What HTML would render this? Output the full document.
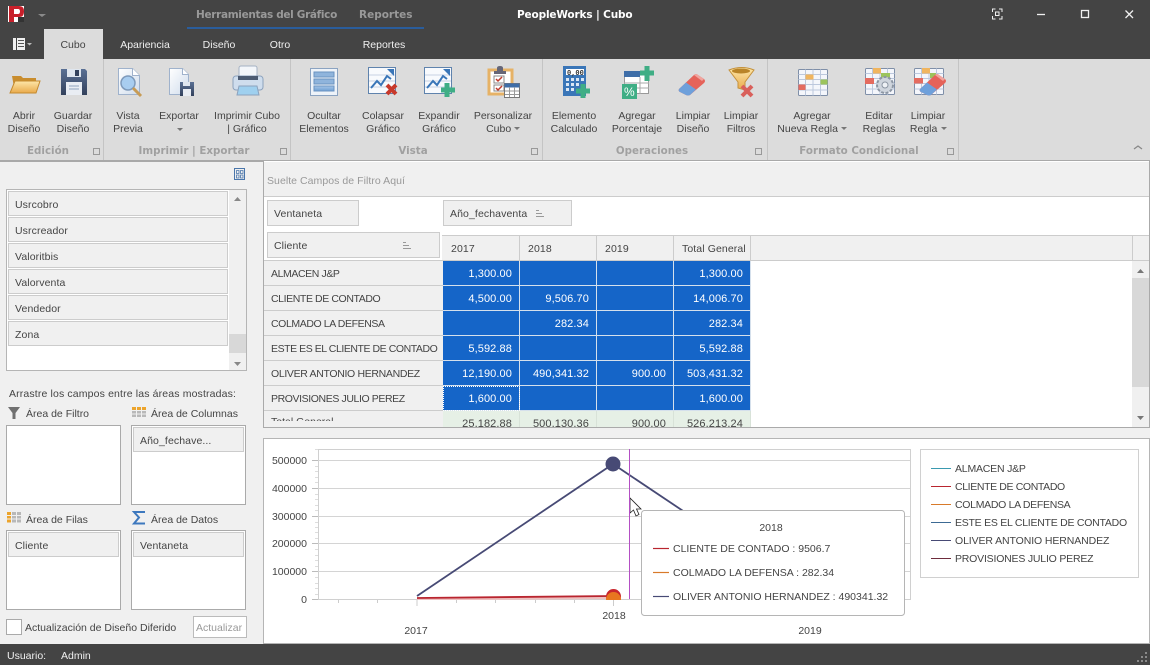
<!DOCTYPE html>
<html lang="es"><head><meta charset="utf-8"><title>PeopleWorks | Cubo</title>
<style>
*{box-sizing:border-box}
html,body{margin:0;padding:0;width:1150px;height:665px;overflow:hidden;background:#f0f0f0}
body{font:10.5px/13px "Liberation Sans",sans-serif;color:#444;position:relative}
div{position:absolute}
.b{background:#444}
.c{transform:translateX(-50%);text-align:center;white-space:nowrap;padding-top:2px}
.l{white-space:nowrap;padding-top:2px}
.w{color:#f0f0f0}
.g{font:bold 10.3px/13px "DejaVu Sans",sans-serif;color:#a0a0a0;transform:translateX(-50%);white-space:nowrap}
.sep{width:1px;top:59px;height:101px;background:#c4c4c4}
.fi{background:#f0f0f0;border:1px solid #ccc;padding:7px 6px 0;white-space:nowrap;letter-spacing:.1px}
.box{background:#fff;border:1px solid #aaa}
.ch{top:235px;height:26px;background:#f0f0f0;border-right:1px solid #ccc;border-top:1px solid #ccc;padding:7px 0 0 8px;letter-spacing:.1px;white-space:nowrap}
.rh{left:264px;width:179px;height:25px;background:#f0f0f0;border-bottom:1px solid #ccc;padding:7px 0 0 7px;white-space:nowrap;letter-spacing:-.4px;color:#444}
.cell{font-size:11px;height:25px;width:77px;background:#1565c8;border-right:1px solid #d5e0ec;border-bottom:1px solid #d5e0ec;color:#fff;text-align:right;padding:7px 7px 0 0;letter-spacing:.1px}
.tot{background:#e6f0e6;color:#444;border-color:#d8e2d8}
</style></head><body>

<div class="b" style="left:0;top:0;width:1150px;height:59px"></div>
<div style="left:44px;top:29px;width:59px;height:30px;background:#dcdcdc"></div>
<div style="left:0;top:59px;width:1150px;height:101px;background:#dcdcdc"></div>
<div style="left:0;top:160px;width:1150px;height:2px;background:#a9a9a9"></div>
<div style="left:187px;top:27px;width:237px;height:2px;background:#2a5d9c"></div>

<div class="l" style="left:196px;top:7px;font-weight:bold;font-family:'DejaVu Sans',sans-serif;font-size:10.5px;color:#999;letter-spacing:-.33px">Herramientas del Gráfico</div>
<div class="l" style="left:359px;top:7px;font-weight:bold;font-family:'DejaVu Sans',sans-serif;font-size:10.5px;color:#999">Reportes</div>
<div class="l" style="left:517px;top:7px;font-weight:bold;font-family:'DejaVu Sans',sans-serif;font-size:10.5px;color:#fff;letter-spacing:-.15px">PeopleWorks | Cubo</div>

<div class="c" style="left:73px;top:37px">Cubo</div>
<div class="c w" style="left:145px;top:37px">Apariencia</div>
<div class="c w" style="left:219px;top:37px">Diseño</div>
<div class="c w" style="left:280px;top:37px">Otro</div>
<div class="c w" style="left:384px;top:37px">Reportes</div>

<div class="sep" style="left:103px"></div><div class="sep" style="left:290px"></div><div class="sep" style="left:542px"></div><div class="sep" style="left:767px"></div><div class="sep" style="left:958px"></div>

<div class="c" style="left:24px;top:108px">Abrir<br>Diseño</div>
<div class="c" style="left:73px;top:108px">Guardar<br>Diseño</div>
<div class="c" style="left:128px;top:108px">Vista<br>Previa</div>
<div class="c" style="left:179px;top:108px">Exportar</div>
<div class="c" style="left:247px;top:108px">Imprimir Cubo<br>| Gráfico</div>
<div class="c" style="left:324px;top:108px">Ocultar<br>Elementos</div>
<div class="c" style="left:383px;top:108px">Colapsar<br>Gráfico</div>
<div class="c" style="left:439px;top:108px">Expandir<br>Gráfico</div>
<div class="c" style="left:503px;top:108px">Personalizar<br>Cubo &nbsp;&nbsp;</div>
<div class="c" style="left:574px;top:108px">Elemento<br>Calculado</div>
<div class="c" style="left:637px;top:108px">Agregar<br>Porcentaje</div>
<div class="c" style="left:693px;top:108px">Limpiar<br>Diseño</div>
<div class="c" style="left:741px;top:108px">Limpiar<br>Filtros</div>
<div class="c" style="left:812px;top:108px">Agregar<br>Nueva Regla &nbsp;&nbsp;</div>
<div class="c" style="left:879px;top:108px">Editar<br>Reglas</div>
<div class="c" style="left:928px;top:108px">Limpiar<br>Regla &nbsp;&nbsp;</div>

<div class="g" style="left:48px;top:145px">Edición</div>
<div class="g" style="left:194px;top:145px">Imprimir | Exportar</div>
<div class="g" style="left:413px;top:145px">Vista</div>
<div class="g" style="left:652px;top:145px">Operaciones</div>
<div class="g" style="left:859px;top:145px">Formato Condicional</div>

<!-- left panel -->
<div class="box" style="left:6px;top:189px;width:241px;height:182px;border-color:#b5b5b5"></div>
<div style="left:229px;top:190px;width:17px;height:180px;background:#f0f0f0"></div>
<div style="left:229px;top:334px;width:17px;height:19px;background:#d8d8d8"></div>
<div class="fi" style="left:8px;top:191px;width:220px;height:25px">Usrcobro</div>
<div class="fi" style="left:8px;top:217px;width:220px;height:25px">Usrcreador</div>
<div class="fi" style="left:8px;top:243px;width:220px;height:25px">Valoritbis</div>
<div class="fi" style="left:8px;top:269px;width:220px;height:25px">Valorventa</div>
<div class="fi" style="left:8px;top:295px;width:220px;height:25px">Vendedor</div>
<div class="fi" style="left:8px;top:321px;width:220px;height:25px">Zona</div>

<div class="l" style="left:9px;top:386px;letter-spacing:.14px">Arrastre los campos entre las áreas mostradas:</div>
<div class="l" style="left:26px;top:406px">Área de Filtro</div>
<div class="l" style="left:151px;top:406px">Área de Columnas</div>
<div class="l" style="left:26px;top:512px">Área de Filas</div>
<div class="l" style="left:151px;top:512px">Área de Datos</div>

<div class="box" style="left:6px;top:425px;width:115px;height:80px"></div>
<div class="box" style="left:131px;top:425px;width:115px;height:80px"></div>
<div class="box" style="left:6px;top:530px;width:115px;height:80px"></div>
<div class="box" style="left:131px;top:530px;width:115px;height:80px"></div>
<div class="fi" style="left:133px;top:427px;width:111px;height:25px">Año_fechave...</div>
<div class="fi" style="left:8px;top:532px;width:111px;height:25px">Cliente</div>
<div class="fi" style="left:133px;top:532px;width:111px;height:25px">Ventaneta</div>

<div class="box" style="left:6px;top:619px;width:16px;height:16px"></div>
<div class="l" style="left:25px;top:620px">Actualización de Diseño Diferido</div>
<div class="box" style="left:193px;top:616px;width:54px;height:22px;border-color:#bbb;color:#999;padding:5px 0 0 2px">Actualizar</div>

<!-- pivot -->
<div style="left:263px;top:161px;width:887px;height:267px;background:#fff;border-left:1px solid #aaa;border-right:1px solid #aaa;border-bottom:1px solid #aaa"></div>
<div style="left:264px;top:162px;width:885px;height:35px;background:#f0f0f0;border-bottom:1px solid #ccc"></div>
<div class="l" style="left:267px;top:173px;color:#999;letter-spacing:.05px">Suelte Campos de Filtro Aquí</div>

<div class="fi" style="left:267px;top:200px;width:92px;height:26px">Ventaneta</div>
<div class="fi" style="left:443px;top:200px;width:129px;height:26px">Año_fechaventa</div>
<div class="fi" style="left:267px;top:232px;width:173px;height:26px">Cliente</div>

<div class="ch" style="left:442px;width:78px;padding-left:9px">2017</div>
<div class="ch" style="left:520px;width:77px">2018</div>
<div class="ch" style="left:597px;width:77px">2019</div>
<div class="ch" style="left:674px;width:77px">Total General</div>
<div class="ch" style="left:751px;width:382px"></div>
<div class="ch" style="left:1133px;width:16px;border-right:0"></div>
<div style="left:264px;top:260px;width:885px;height:1px;background:#ccc"></div>

<div class="rh" style="top:261px">ALMACEN J&amp;P</div>
<div class="rh" style="top:286px">CLIENTE DE CONTADO</div>
<div class="rh" style="top:311px">COLMADO LA DEFENSA</div>
<div class="rh" style="top:336px;letter-spacing:-.44px">ESTE ES EL CLIENTE DE CONTADO</div>
<div class="rh" style="top:361px;letter-spacing:-.33px">OLIVER ANTONIO HERNANDEZ</div>
<div class="rh" style="top:386px">PROVISIONES JULIO PEREZ</div>
<div style="left:264px;top:411px;width:179px;height:16px;background:#f0f0f0"><div style="left:0;top:0;width:179px;height:10px;overflow:hidden"><div style="left:7px;top:5px;white-space:nowrap">Total General</div></div></div>

<div class="cell" style="left:443px;top:261px">1,300.00</div><div class="cell" style="left:520px;top:261px"></div><div class="cell" style="left:597px;top:261px"></div><div class="cell" style="left:674px;top:261px">1,300.00</div>
<div class="cell" style="left:443px;top:286px">4,500.00</div><div class="cell" style="left:520px;top:286px">9,506.70</div><div class="cell" style="left:597px;top:286px"></div><div class="cell" style="left:674px;top:286px">14,006.70</div>
<div class="cell" style="left:443px;top:311px"></div><div class="cell" style="left:520px;top:311px">282.34</div><div class="cell" style="left:597px;top:311px"></div><div class="cell" style="left:674px;top:311px">282.34</div>
<div class="cell" style="left:443px;top:336px">5,592.88</div><div class="cell" style="left:520px;top:336px"></div><div class="cell" style="left:597px;top:336px"></div><div class="cell" style="left:674px;top:336px">5,592.88</div>
<div class="cell" style="left:443px;top:361px">12,190.00</div><div class="cell" style="left:520px;top:361px">490,341.32</div><div class="cell" style="left:597px;top:361px">900.00</div><div class="cell" style="left:674px;top:361px">503,431.32</div>
<div class="cell" style="left:443px;top:386px;outline:1px dotted #fff;outline-offset:-1px">1,600.00</div><div class="cell" style="left:520px;top:386px"></div><div class="cell" style="left:597px;top:386px"></div><div class="cell" style="left:674px;top:386px">1,600.00</div>
<div style="left:443px;top:411px;width:308px;height:16px;overflow:hidden">
<div class="cell tot" style="left:0;top:0">25,182.88</div><div class="cell tot" style="left:77px;top:0">500,130.36</div><div class="cell tot" style="left:154px;top:0">900.00</div><div class="cell tot" style="left:231px;top:0">526,213.24</div>
</div>

<div style="left:1132px;top:261px;width:17px;height:166px;background:#f0f0f0"></div>
<div style="left:1132px;top:278px;width:17px;height:109px;background:#d8d8d8"></div>

<!-- chart panel -->
<div style="left:263px;top:438px;width:887px;height:206px;background:#fff;border:1px solid #b5b5b5"></div>

<svg width="1150" height="665" style="position:absolute;left:0;top:0" xmlns="http://www.w3.org/2000/svg">
<defs>
<linearGradient id="fo" x1="0" y1="0" x2="0" y2="1"><stop offset="0" stop-color="#fde7a9"/><stop offset="1" stop-color="#e9aa4b"/></linearGradient>
<linearGradient id="dk" x1="0" y1="0" x2="0" y2="1"><stop offset="0" stop-color="#5a7094"/><stop offset="1" stop-color="#33415c"/></linearGradient>
<linearGradient id="dc" x1="0" y1="0" x2="1" y2="1"><stop offset="0" stop-color="#fff"/><stop offset="1" stop-color="#cfdcec"/></linearGradient>
<linearGradient id="bl" x1="0" y1="0" x2="0" y2="1"><stop offset="0" stop-color="#a5c6e8"/><stop offset="1" stop-color="#6e9fd3"/></linearGradient>
<clipPath id="pc"><rect x="318" y="449" width="592" height="151"/></clipPath>
<g id="gridt"><rect width="29" height="26" rx="1" fill="#f4f6fb" stroke="#7f8fa8"/><path d="M7 0v26M14.500 0v26M22 0v26M0 5h29M0 10h29M0 15h29M0 20.500h29" stroke="#bcc8dd" fill="none"/></g>
<g id="chartt"><rect x=".5" y=".5" width="27" height="26" fill="#f8fafd" stroke="#5f83ad"/><path d="M1 8h26M1 14h26M1 20h26" stroke="#c7d3e4"/><path d="M3 21l6-7 4 4 6-9 4 3" fill="none" stroke="#3a76b8" stroke-width="2"/><path d="M19 2h7v7z" fill="#3a76b8"/></g>
<g id="eras"><path d="M0 16L15 2q2-2 4 0l6 4q2 2 0 4L11 22q-2 1-4 0L1 19q-2-1-1-3z" fill="#e5635a"/><path d="M0 16l7-6.500 10 7L11 22q-2 1-4 0L1 19q-2-1-1-3z" fill="#6ea0db"/><path d="M15 2q2-2 4 0l6 4-2 2-8-6z" fill="#f0a59f"/></g>
</defs>

<!-- logo + menu -->
<rect x="8" y="6" width="16" height="16" fill="#fff"/>
<path d="M9 6h10q5 0 5 5v1q0 5-5 5h-5v5H9zM14 9v5h4q2 0 2-2.500T18 9z" fill="#c8202b"/>
<rect x="18" y="17" width="6" height="5" fill="#333"/>
<path d="M38 14h8l-4 3z" fill="#8a8a8a"/>
<rect x="13" y="38" width="3" height="12" fill="#f0f0f0"/><rect x="17" y="38" width="8" height="12" fill="#f0f0f0"/><path d="M18 40.500h6M18 43.500h6M18 46.500h6" stroke="#555"/>
<path d="M27 43h5l-2.500 2.500z" fill="#bbb"/>

<!-- window controls -->
<path d="M992.500 12v-3h3M999 9h3v3M1002 16v3h-3M995.500 19h-3v-3" fill="none" stroke="#f0f0f0" stroke-width="1"/><rect x="995.500" y="12" width="3.500" height="3.500" fill="none" stroke="#f0f0f0"/>
<path d="M1037 14.500h8" stroke="#f0f0f0" stroke-width="1.300"/>
<rect x="1081.500" y="10.500" width="7" height="7" fill="none" stroke="#f0f0f0" stroke-width="1.300"/>
<path d="M1125.500 10.500l7.500 7.500M1133 10.500l-7.500 7.500" stroke="#f0f0f0" stroke-width="1.300"/>

<!-- folder -->
<path d="M12 76h9l2 2h13v15H15z" fill="#c98d2e"/><path d="M15 81h25l-4 12H10z" fill="url(#fo)" stroke="#c48a2f"/>
<!-- floppy -->
<path d="M61 69h24l2 2v24H61z" fill="url(#dk)"/><rect x="67" y="69" width="14" height="8" fill="#dfe6ef"/><rect x="75" y="70" width="4" height="6" fill="#33415c"/><rect x="66" y="82" width="16" height="13" fill="#e9edf3"/><path d="M69 86h10M69 89h10" stroke="#8fa2bd"/>
<!-- vista previa -->
<path d="M118.500 68.500h14l7 7v19h-21z" fill="url(#dc)" stroke="#9fb2cc"/><path d="M132.500 68.500v7h7" fill="#fff" stroke="#9fb2cc"/>
<circle cx="128" cy="83" r="7" fill="#a8cdf0" stroke="#7e9abb" stroke-width="1.500"/><path d="M133 88l8 8" stroke="#c79b55" stroke-width="3"/>
<!-- exportar -->
<path d="M169.500 68.500h13l6 6v20h-19z" fill="url(#dc)" stroke="#9fb2cc"/><path d="M182.500 68.500v6h6" fill="#fff" stroke="#9fb2cc"/>
<rect x="180" y="82" width="14" height="14" fill="url(#dk)"/><rect x="183" y="82" width="7" height="4" fill="#dfe6ef"/><rect x="183" y="89" width="8" height="7" fill="#e9edf3"/>
<!-- imprimir -->
<rect x="239" y="66" width="18" height="12" rx="2" fill="#f3f6fa" stroke="#a5b2c4"/><rect x="233" y="76" width="30" height="14" rx="3" fill="#cfdded" stroke="#8ca2bd"/><rect x="238" y="76" width="20" height="4" fill="#4c5b72"/><path d="M239 86h18l2 9h-22z" fill="#9fd0ef" stroke="#8ca2bd"/>
<!-- ocultar -->
<rect x="310.500" y="68.500" width="27" height="27" fill="#eef3f9" stroke="#8ba3c1"/><rect x="314" y="72" width="20" height="5" fill="#8fb4dc" stroke="#6b93c1"/><rect x="314" y="79" width="20" height="5" fill="#8fb4dc" stroke="#6b93c1"/><rect x="314" y="86" width="20" height="5" fill="url(#bl)" stroke="#6b93c1"/>
<!-- colapsar -->
<use href="#chartt" x="368" y="67"/><path d="M387 85l9 9M396 85l-9 9" stroke="#c8392b" stroke-width="4"/>
<!-- expandir -->
<use href="#chartt" x="424" y="67"/><path d="M447 83v14M441 90h14" stroke="#3fae85" stroke-width="5"/>
<!-- personalizar -->
<rect x="489" y="70" width="23" height="24" fill="#fff" stroke="#e6b266" stroke-width="3"/><path d="M497 71v-3q0-2 3-2t3 2v3h3v3h-12v-3z" fill="#667"/><rect x="494" y="76" width="10" height="7" fill="#fff" stroke="#888"/><rect x="494" y="85" width="10" height="6" fill="#fff" stroke="#888"/><path d="M496 79l2 2 4-4M496 88l2 2 4-4" stroke="#c0392b" fill="none" stroke-width="1.500"/>
<rect x="504.500" y="83.500" width="15" height="14" fill="#fff" stroke="#777"/><rect x="504.500" y="83.500" width="15" height="4" fill="#3f6ea8"/><path d="M509.500 87v10M514.500 87v10M505 91h14M505 94.500h14" stroke="#999"/>
<!-- elemento -->
<rect x="563" y="66" width="23" height="30" fill="#3a76b8"/><rect x="566" y="69" width="18" height="6" fill="#fff"/>
<text x="567" y="75" font-family="Liberation Mono,monospace" font-size="7" font-weight="bold" fill="#333">0,00</text>
<path d="M566 78h3v3h-3zM571 78h3v3h-3zM576 78h3v3h-3zM581 78h3v3h-3zM566 83h3v3h-3zM571 83h3v3h-3zM576 83h3v3h-3zM566 88h3v3h-3zM571 88h3v3h-3z" fill="#dbe7f5"/>
<path d="M583 84v14M576 91h14" stroke="#3fae85" stroke-width="5"/>
<!-- agregar % -->
<rect x="624.500" y="71.500" width="24" height="22" fill="#fff" stroke="#999"/><rect x="624" y="71" width="16" height="6" fill="#3f6ea8"/><path d="M624 83h25M624 88h25M640 77v17" stroke="#aaa"/>
<path d="M647 66v15M640 73h14" stroke="#3fae85" stroke-width="5"/>
<rect x="622" y="84" width="15" height="15" fill="#3fae85"/><text x="624" y="96" font-size="12" font-family="Liberation Sans,sans-serif" fill="#fff">%</text>
<!-- limpiar diseño -->
<use href="#eras" x="679" y="73"/>
<!-- limpiar filtros -->
<path d="M729 70q13-5 25 0l-9 12v8l-7-2v-6z" fill="url(#fo)" stroke="#c4913b"/><ellipse cx="741" cy="71" rx="9" ry="2.500" fill="#b98428"/>
<path d="M742 86l10 10M752 86l-10 10" stroke="#d9605b" stroke-width="4"/>
<!-- reglas -->
<use href="#gridt" x="798.500" y="69.500"/><rect x="805.500" y="74.500" width="8" height="5" fill="#f0b55f"/><rect x="820.500" y="79.500" width="7" height="5" fill="#9cc45c"/><rect x="798.500" y="84.500" width="7" height="5.500" fill="#e46b5f"/>
<use href="#gridt" x="865.500" y="68.500" /><rect x="873" y="68" width="8" height="5.500" fill="#f0b55f"/><rect x="865" y="78" width="9" height="6" fill="#e46b5f"/><rect x="881" y="73" width="9" height="5" fill="#9cc45c"/>
<circle cx="885" cy="85" r="8" fill="#cfd5dd" stroke="#8c96a3" stroke-width="2" stroke-dasharray="3 1.500"/><circle cx="885" cy="85" r="3" fill="#eef1f5" stroke="#8c96a3"/>
<use href="#gridt" x="914.500" y="68.500"/><rect x="922" y="68" width="8" height="5.500" fill="#f0b55f"/><rect x="914" y="78" width="9" height="5.500" fill="#e46b5f"/><rect x="930" y="73" width="6" height="5" fill="#9cc45c"/>
<use href="#eras" x="920" y="73"/>

<!-- drop arrows -->
<path d="M177 128h6l-3 3z" fill="#777"/><path d="M514 127h6l-3 3z" fill="#777"/><path d="M841 127h6l-3 3z" fill="#777"/><path d="M941 127h6l-3 3z" fill="#777"/>
<!-- launchers -->
<g fill="none" stroke="#999"><path d="M93.500 148.500h6v6h-6z"/><path d="M280.500 148.500h6v6h-6z"/><path d="M531.500 148.500h6v6h-6z"/><path d="M755.500 148.500h6v6h-6z"/><path d="M947.500 148.500h6v6h-6z"/></g>
<path d="M1134 149l4-3 4 3" fill="none" stroke="#888" stroke-width="1.300"/>

<!-- panel layout icon -->
<rect x="234.500" y="168.500" width="10" height="11" fill="none" stroke="#4a76ab"/><path d="M236.500 170.500h2.500v3h-2.500zM240.500 170.500h2.500v3h-2.500zM236.500 175h2.500v3h-2.500zM240.500 175h2.500v3h-2.500z" fill="none" stroke="#4a76ab" stroke-width=".8"/>
<path d="M234 201l3.500-4 3.500 4z" fill="#888"/><path d="M234 362l3.500 4 3.500-4z" fill="#888"/>

<!-- area icons -->
<path d="M8 407h12l-4.500 6v6h-3v-6z" fill="#707070"/>
<path d="M132 407h4v3h-4zM137 407h4v3h-4zM142 407h4v3h-4z" fill="#eca42c"/><path d="M132 411h4v2.500h-4zM137 411h4v2.500h-4zM142 411h4v2.500h-4zM132 414.500h4v2.500h-4zM137 414.500h4v2.500h-4zM142 414.500h4v2.500h-4z" fill="#b8b8b8"/>
<path d="M7 512h4v3h-4zM7 516h4v2.500h-4zM7 519.500h4v3h-4z" fill="#eca42c"/><path d="M12 512h4v3h-4zM17 512h4v3h-4zM12 516h4v2.500h-4zM17 516h4v2.500h-4zM12 519.500h4v3h-4zM17 519.500h4v3h-4z" fill="#b8b8b8"/>
<path d="M145 512h-11l5 5.500-5 6h11" fill="none" stroke="#3d78be" stroke-width="2"/>

<!-- sort glyphs -->
<g stroke="#999"><path d="M536 210.500h3M536 213.500h6M536 216.500h8"/><path d="M403 242.500h3M403 245.500h6M403 248.500h8"/></g>
<!-- pivot scrollbar arrows -->
<path d="M1137 273l3.500-4 3.500 4z" fill="#777"/><path d="M1137 416l3.500 4 3.500-4z" fill="#777"/>

<!-- chart -->
<rect x="318.500" y="449.500" width="592" height="150" fill="#fff" stroke="#d0d0d0"/>
<path d="M318 460.500h592M318 488.500h592M318 516.500h592M318 543.500h592M318 571.500h592" stroke="#d4d4d4"/>
<path d="M312 460.500h6M312 488.500h6M312 516.500h6M312 543.500h6M312 571.500h6M312 599.500h6" stroke="#bbb"/>
<path d="M315 449.500h3M315 466.500h3M315 471.500h3M315 477.500h3M315 482.500h3M315 494.500h3M315 499.500h3M315 505.500h3M315 510.500h3M315 522.500h3M315 527.500h3M315 532.500h3M315 538.500h3M315 549.500h3M315 555.500h3M315 560.500h3M315 566.500h3M315 577.500h3M315 583.500h3M315 588.500h3M315 594.500h3" stroke="#ddd"/>
<path d="M338.500 600v3M377.500 600v3M417 600v6M456.500 600v3M495.500 600v3M535.500 600v3M574.500 600v3M613.500 600v6M653 600v3M692 600v3M731.500 600v3M771 600v3M810 600v6M849 600v3M888 600v3" stroke="#ccc"/>
<g clip-path="url(#pc)">
<path d="M417 596L613 464L810 596" fill="none" stroke="#474a75" stroke-width="1.800"/>
<circle cx="613" cy="464" r="7.500" fill="#474a75"/>
<path d="M417 599L613 597.500" stroke="#eec0c0" stroke-width="3" fill="none"/>
<path d="M417 598L613 596" stroke="#b9252f" stroke-width="1.800" fill="none"/>
<circle cx="613.500" cy="596.500" r="7.500" fill="#c9262d"/>
<circle cx="613.500" cy="599.500" r="7.500" fill="#e8761f"/>
</g>
<path d="M630 498v15l3.500-3 2.500 6 3-1.500-2.500-5.500h4.500z" fill="#fff" stroke="#222" stroke-width=".8"/>

<!-- tooltip -->
<rect x="641.500" y="510.500" width="263" height="105" rx="3" fill="#fff" stroke="#b5b5b5"/>
<path d="M653 548.500h16" stroke="#b9252f" stroke-width="1.200"/><path d="M653 572.500h16" stroke="#d87a2a" stroke-width="1.200"/><path d="M653 596.500h16" stroke="#474a75" stroke-width="1.200"/>

<!-- legend -->
<rect x="920.500" y="449.500" width="218" height="128" fill="#fff" stroke="#d0d0d0"/>
<path d="M931 468.500h20" stroke="#3a9ab0"/><path d="M931 486.500h20" stroke="#b9252f"/><path d="M931 504.500h20" stroke="#d87a2a"/><path d="M931 522.500h20" stroke="#3c6a94"/><path d="M931 540.500h20" stroke="#474a75"/><path d="M931 558.500h20" stroke="#6e2c3c"/>
</svg>
<div style="left:629px;top:449px;width:1px;height:150px;background:#b44fc4"></div>

<div class="l" style="right:843px;top:453px">500000</div>
<div class="l" style="right:843px;top:481px">400000</div>
<div class="l" style="right:843px;top:509px">300000</div>
<div class="l" style="right:843px;top:536px">200000</div>
<div class="l" style="right:843px;top:564px">100000</div>
<div class="l" style="right:843px;top:592px">0</div>
<div class="c" style="left:416px;top:623px">2017</div>
<div class="c" style="left:614px;top:608px">2018</div>
<div class="c" style="left:810px;top:623px">2019</div>

<div class="c" style="left:771px;top:520px">2018</div>
<div class="l" style="left:673px;top:541px">CLIENTE DE CONTADO : 9506.7</div>
<div class="l" style="left:673px;top:565px">COLMADO LA DEFENSA : 282.34</div>
<div class="l" style="left:673px;top:589px">OLIVER ANTONIO HERNANDEZ : 490341.32</div>

<div class="l" style="left:955px;top:461px;letter-spacing:-.2px">ALMACEN J&amp;P</div>
<div class="l" style="left:955px;top:479px;letter-spacing:-.37px">CLIENTE DE CONTADO</div>
<div class="l" style="left:955px;top:497px;letter-spacing:-.3px">COLMADO LA DEFENSA</div>
<div class="l" style="left:955px;top:515px;letter-spacing:-.25px">ESTE ES EL CLIENTE DE CONTADO</div>
<div class="l" style="left:955px;top:533px;letter-spacing:-.1px">OLIVER ANTONIO HERNANDEZ</div>
<div class="l" style="left:955px;top:551px;letter-spacing:-.2px">PROVISIONES JULIO PEREZ</div>

<!-- status bar -->
<div class="b" style="left:0;top:644px;width:1150px;height:21px"></div>
<div class="l w" style="left:7px;top:648px">Usuario:</div>
<div class="l w" style="left:61px;top:648px">Admin</div>
<svg width="12" height="12" style="position:absolute;left:1136px;top:651px"><g fill="#8a8a8a"><rect x="9" y="1" width="2" height="2"/><rect x="5" y="5" width="2" height="2"/><rect x="9" y="5" width="2" height="2"/><rect x="1" y="9" width="2" height="2"/><rect x="5" y="9" width="2" height="2"/><rect x="9" y="9" width="2" height="2"/></g></svg>
</body></html>
